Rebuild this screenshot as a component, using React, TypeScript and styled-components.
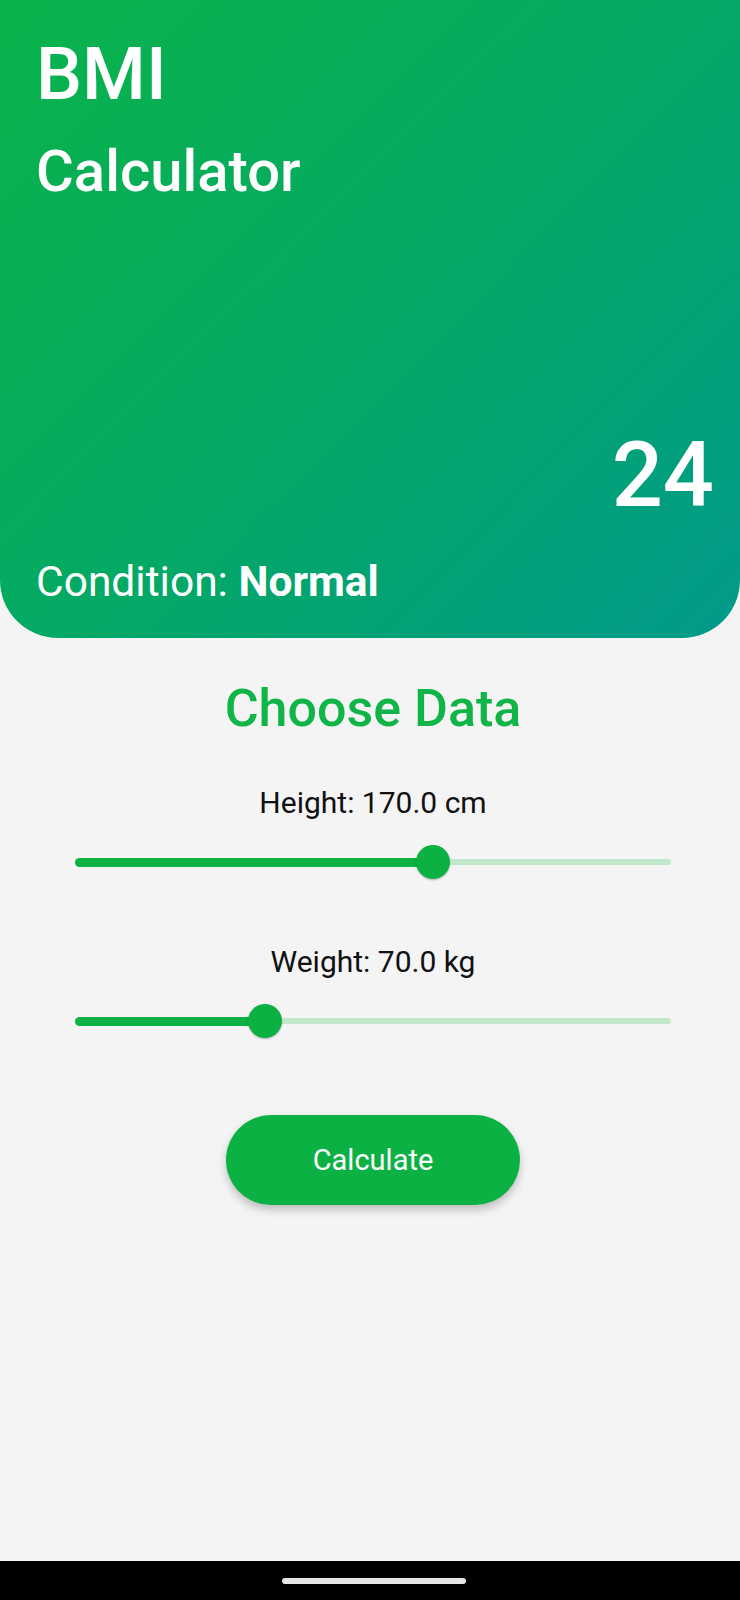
import React from "react";
import styled, { createGlobalStyle } from "styled-components";

const GlobalStyle = createGlobalStyle`
  html, body {
    margin: 0;
    padding: 0;
    background: #f4f4f4;
    font-family: Roboto, "Noto Sans", "Liberation Sans", sans-serif;
  }
  * { box-sizing: border-box; }
`;

const Screen = styled.div`
  width: 740px;
  height: 1600px;
  display: flex;
  flex-direction: column;
  background: #f4f4f4;
  overflow: hidden;
`;

const Header = styled.header`
  height: 638px;
  flex: none;
  display: flex;
  flex-direction: column;
  padding: 36px 26px 31px 36px;
  color: #ffffff;
  background: linear-gradient(135deg, #0ab34a 0%, #04a964 50%, #019a8a 100%);
  border-radius: 0 0 58px 58px;
`;

const Title = styled.h1`
  margin: 0;
  font-size: 73px;
  line-height: 76px;
  font-weight: 500;
`;

const Subtitle = styled.h2`
  margin: 30px 0 0;
  font-size: 58px;
  line-height: 58px;
  font-weight: 500;
`;

const Spacer = styled.div`
  flex: 1;
`;

const Score = styled.div`
  align-self: flex-end;
  font-size: 90px;
  line-height: 90px;
  font-weight: 500;
`;

const Condition = styled.div`
  margin-top: 36px;
  font-size: 42.5px;
  line-height: 50px;
  font-weight: 400;

  strong {
    font-weight: 700;
  }
`;

const Body = styled.main`
  flex: 1;
  display: flex;
  flex-direction: column;
  align-items: center;
  padding: 43px 69px 0 75px;
`;

const SectionTitle = styled.h3`
  margin: 0;
  font-size: 52px;
  line-height: 56px;
  font-weight: 500;
  color: #10b447;
`;

const Label = styled.div<{ $gap: number }>`
  margin-top: ${(p) => p.$gap}px;
  font-size: 30px;
  line-height: 34px;
  color: #111111;
`;

const SliderWrap = styled.div`
  margin-top: 24px;
  width: 100%;
  height: 36px;
  position: relative;
  display: flex;
  align-items: center;
`;

const TrackRow = styled.div`
  width: 100%;
  display: flex;
  align-items: center;
`;

const ActiveTrack = styled.div`
  height: 9px;
  background: #0cb143;
  border-radius: 5px 0 0 5px;
`;

const InactiveTrack = styled.div`
  flex: 1;
  height: 6px;
  background: #c2e8cb;
  border-radius: 0 3px 3px 0;
`;

const Thumb = styled.div`
  position: absolute;
  top: 50%;
  width: 34px;
  height: 34px;
  margin: -17px 0 0 -17px;
  border-radius: 50%;
  background: #0cb143;
  box-shadow: 0 1px 2px rgba(0, 0, 0, 0.25);
`;

const Button = styled.button`
  margin-top: 76px;
  width: 294px;
  height: 90px;
  border: none;
  border-radius: 45px;
  background: #0cb143;
  color: #ffffff;
  font-family: Roboto, "Noto Sans", "Liberation Sans", sans-serif;
  font-size: 29px;
  font-weight: 400;
  box-shadow: 0 5px 8px rgba(0, 0, 0, 0.22);
  cursor: pointer;
`;

const NavBar = styled.div`
  height: 39px;
  flex: none;
  background: #000000;
  display: flex;
  align-items: center;
  justify-content: center;
`;

const Handle = styled.div`
  width: 184px;
  height: 6px;
  border-radius: 3px;
  background: #e6e6e6;
  margin-left: 8px;
`;

function Slider({ fraction }: { fraction: number }) {
  return (
    <SliderWrap>
      <TrackRow>
        <ActiveTrack style={{ width: `${fraction * 100}%` }} />
        <InactiveTrack />
      </TrackRow>
      <Thumb style={{ left: `${fraction * 100}%` }} />
    </SliderWrap>
  );
}

export default function App() {
  return (
    <>
      <GlobalStyle />
      <Screen>
        <Header>
          <Title>BMI</Title>
          <Subtitle>Calculator</Subtitle>
          <Spacer />
          <Score>24</Score>
          <Condition>
            Condition: <strong>Normal</strong>
          </Condition>
        </Header>
        <Body>
          <SectionTitle>Choose Data</SectionTitle>
          <Label $gap={49}>Height: 170.0 cm</Label>
          <Slider fraction={0.6} />
          <Label $gap={65}>Weight: 70.0 kg</Label>
          <Slider fraction={0.319} />
          <Button>Calculate</Button>
        </Body>
        <NavBar>
          <Handle />
        </NavBar>
      </Screen>
    </>
  );
}
